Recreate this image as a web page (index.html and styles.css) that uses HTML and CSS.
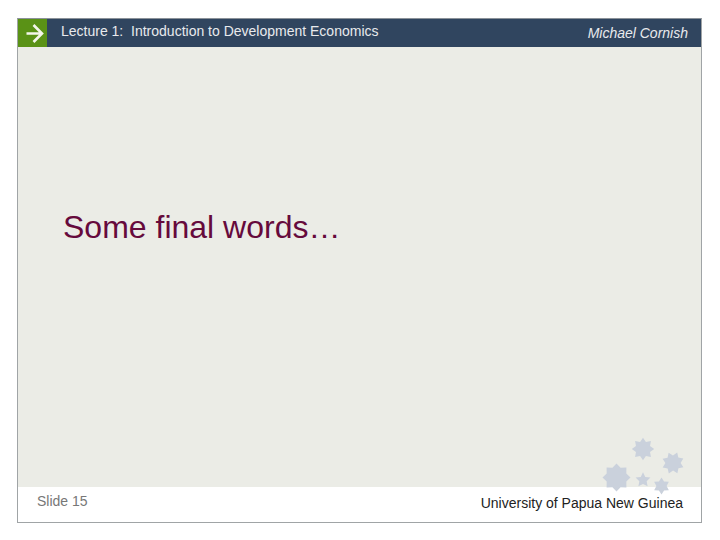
FILE: index.html
```html
<!DOCTYPE html>
<html lang="en">
<head>
<meta charset="utf-8">
<title>Some final words…</title>
<link rel="stylesheet" href="styles.css">
</head>
<body>
<div class="slide">
  <header class="bar">
    <div class="arrow-box">
      <svg width="29" height="29" viewBox="0 0 29 29"><path d="M8.500 14.500H23M15.500 6L24 14.500L15.500 23" fill="none" stroke="#f4f6ea" stroke-width="2.600"/></svg>
    </div>
    <div class="lecture">Lecture 1:&nbsp; Introduction to Development Economics</div>
    <div class="author">Michael Cornish</div>
  </header>
  <main class="body">
    <h1 class="title">Some final words…</h1>
  </main>
  <footer class="foot">
    <div class="num">Slide 15</div>
    <div class="uni">University of Papua New Guinea</div>
  </footer>
  <svg class="stars" width="100" height="70" viewBox="590 430 100 70" fill="#cad1dc">
    <defs>
      <polygon id="s8" points="0,-10 2.6,-6.28 7.07,-7.07 6.28,-2.6 10,0 6.28,2.6 7.07,7.07 2.6,6.28 0,10 -2.6,6.28 -7.07,7.07 -6.28,2.6 -10,0 -6.28,-2.6 -7.07,-7.07 -2.6,-6.28"/>
      <polygon id="s8b" points="0,-10 2.91,-7.02 7.07,-7.07 7.02,-2.91 10,0 7.02,2.91 7.07,7.07 2.91,7.02 0,10 -2.91,7.02 -7.07,7.07 -7.02,2.91 -10,0 -7.02,-2.91 -7.07,-7.07 -2.91,-7.02"/>
      <polygon id="s6" points="0,-10 3,-5.2 8.66,-5 6,0 8.66,5 3,5.2 0,10 -3,5.2 -8.66,5 -6,0 -8.66,-5 -3,-5.2"/>
      <polygon id="s5" points="0,-10 2.9,-4 9.5,-3.1 4.700,1.600 5.900,8.100 0,5 -5.900,8.100 -4.700,1.600 -9.500,-3.100 -2.900,-4"/>
    </defs>
    <use href="#s8b" transform="translate(616.500 477.500) scale(1.4)"/>
    <use href="#s8" transform="translate(643 449) scale(1.12)"/>
    <use href="#s8" transform="translate(673 463) scale(1.12) rotate(22)"/>
    <use href="#s5" transform="translate(643 480) scale(.78)"/>
    <use href="#s6" transform="translate(661.500 486) scale(.85)"/>
  </svg>
</div>
</body>
</html>
```

FILE: styles.css
```css
html, body {
  margin: 0;
  padding: 0;
  background: #fff;
}
body {
  padding: 18px 0 0 17px;
  font-family: "Liberation Sans", Arial, sans-serif;
}
.slide {
  position: relative;
  box-sizing: border-box;
  width: 685px;
  height: 505px;
  border: 1px solid #a0a4a6;
  border-top-color: #8b9299;
  display: flex;
  flex-direction: column;
  background: #fff;
}
.bar {
  height: 28px;
  background: #30455f;
  display: flex;
  align-items: center;
  color: #fff;
  font-size: 14px;
}
.arrow-box {
  align-self: flex-start;
  width: 29px;
  height: 29px;
  background: #5a9216;
  display: flex;
}
.lecture {
  margin-left: 14px;
  margin-top: -4px;
  font-size: 14px;
  color: #e8eaed;
  flex: 1;
}
.author {
  margin-right: 13px;
  font-style: italic;
  font-size: 14px;
  color: #e8eaed;
}
.body {
  height: 440px;
  background: #ebece6;
  display: flex;
  align-items: flex-start;
}
.title {
  margin: 162px 0 0 45px;
  font-weight: 400;
  font-size: 32px;
  line-height: 36px;
  color: #660a3c;
}
.foot {
  flex: 1;
  display: flex;
  justify-content: space-between;
  align-items: flex-start;
  font-size: 14px;
  padding: 6px 18px 0 19px;
}
.num {
  color: #777;
}
.uni {
  color: #222;
  margin-top: 2px;
}
.stars {
  position: absolute;
  left: 572px;
  top: 411px;
}
```
